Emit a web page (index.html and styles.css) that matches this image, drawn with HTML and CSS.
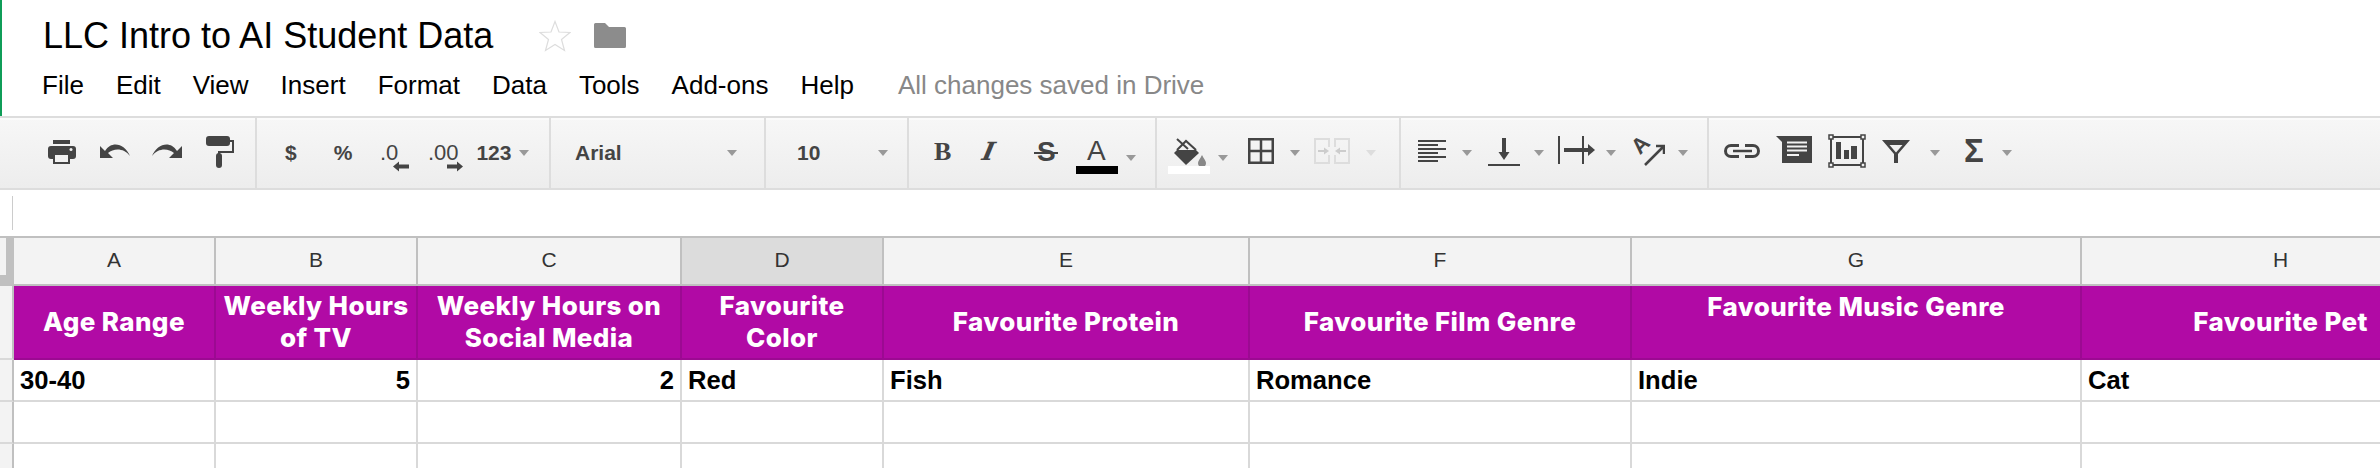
FILE: index.html
```html
<!DOCTYPE html>
<html lang="en">
<head>
  <meta charset="UTF-8" />
  <title>LLC Intro to AI Student Data</title>
  <link rel="stylesheet" href="styles.css">
</head>
<body>
  <header class="docbar">
    <div class="title-row">
      <h1 class="doc-title">LLC Intro to AI Student Data</h1>
      <svg class="star" width="32" height="32" viewBox="0 0 32 32"><polygon points="16,1.5 20,12 31,12.5 22.5,19.5 25.5,30.5 16,24.5 6.5,30.5 9.500,19.5 1,12.5 12,12" fill="none" stroke="#ddd" stroke-width="1.2"/></svg>
      <svg class="folder" width="32" height="25" viewBox="0 0 32 25"><path d="M0 1.500 Q0 0 1.500 0 H11 L15 4 H30.500 Q32 4 32 5.500 V23.500 Q32 25 30.500 25 H1.500 Q0 25 0 23.500Z" fill="#8c8c8c"/></svg>
    </div>
    <nav class="menu">
      <span>File</span><span>Edit</span><span>View</span><span>Insert</span><span>Format</span><span>Data</span><span>Tools</span><span>Add-ons</span><span>Help</span>
      <span class="saved">All changes saved in Drive</span>
    </nav>
  </header>

  <div class="toolbar">
    <div class="tb-group g-history">
      <svg class="i-print" width="28" height="70" viewBox="0 0 28 70"><rect x="5" y="22" width="17" height="4"/><rect y="28" width="28" height="13" rx="3"/><rect x="5" y="35" width="17" height="11"/><rect x="7" y="37" width="13" height="7" fill="#f2f2f2"/><circle cx="23" cy="31.500" r="1.500" fill="#f2f2f2"/></svg>
      <svg class="i-undo" width="30" height="70" viewBox="0 0 30 70"><path d="M0 28 V40 H13 L8 35 C14 30 24 30 30 38 C25 26 12 22 5 33Z"/></svg>
      <svg class="i-redo" width="30" height="70" viewBox="0 0 30 70"><path transform="matrix(-1 0 0 1 30 0)" d="M0 28 V40 H13 L8 35 C14 30 24 30 30 38 C25 26 12 22 5 33Z"/></svg>
      <svg class="i-roller" width="28" height="70" viewBox="0 0 28 70"><rect y="18" width="24" height="10" rx="3"/><path d="M24 23 H27 V34 H13 V38" fill="none" stroke="#444" stroke-width="2"/><rect x="10" y="35" width="6" height="15" rx="3"/></svg>
    </div>
    <div class="tb-group g-number">
      <span class="tb-text t-dollar">$</span>
      <span class="tb-text t-percent">%</span>
      <svg class="i-dec-less" width="29" height="70" viewBox="0 0 29 70"><text x="0" y="42" class="svg-num">.0</text><polygon points="13,48.500 19,43.500 19,46.500 29,46.500 29,50.500 19,50.500 19,53.500"/></svg>
      <svg class="i-dec-more" width="35" height="70" viewBox="0 0 35 70"><text x="0" y="42" class="svg-num">.00</text><polygon points="35,48.500 29,43.500 29,46.500 19,46.500 19,50.500 29,50.500 29,53.500"/></svg>
      <span class="tb-text t-format">123</span>
      <i class="caret c-format"></i>
    </div>
    <div class="tb-group g-font">
      <span class="tb-text">Arial</span>
      <i class="caret c-end"></i>
    </div>
    <div class="tb-group g-size">
      <span class="tb-text">10</span>
      <i class="caret c-end"></i>
    </div>
    <div class="tb-group g-style">
      <svg class="i-bold" width="18" height="70" viewBox="0 0 18 70"><text x="0" y="42" class="svg-b">B</text></svg>
      <svg class="i-italic" width="28" height="70" viewBox="-4 0 28 70"><text class="svg-i" transform="translate(-3 42) skewX(-12)">I</text></svg>
      <svg class="i-strike" width="24" height="70" viewBox="0 0 24 70"><text x="3" y="43" class="svg-s">S</text><rect y="34" width="24" height="2"/></svg>
      <svg class="i-color" width="42" height="70" viewBox="0 0 42 70"><text x="11" y="42" class="svg-a">A</text><rect y="48" width="42" height="8" fill="#000"/></svg>
      <i class="caret c-color"></i>
    </div>
    <div class="tb-group g-cell">
      <svg class="i-fill" width="42" height="70" viewBox="0 0 42 70"><path d="M6 35 L9 32 H28 L31 35 L18 47Z"/><path d="M9 32 L18 23 L28 32 M9 21 L20 31" fill="none" stroke="#444" stroke-width="2"/><path d="M34 37 C32 41 30 43 30 45 A4 4 0 0 0 38 45 C38 43 36 41 34 37Z" fill="#888"/><rect y="48" width="42" height="8" fill="#fff"/></svg>
      <i class="caret c-fill"></i>
      <svg class="i-borders" width="26" height="70" viewBox="0 0 26 70"><path d="M1.250 21.250 H24.750 V44.750 H1.250Z M13 21 V45 M1 33 H25" fill="none" stroke="#444" stroke-width="2.500"/></svg>
      <i class="caret c-borders"></i>
      <svg class="i-merge" width="36" height="70" viewBox="0 0 36 70"><path d="M15 29 V21 H1 V45 H15 V37 M21 29 V21 H35 V45 H21 V37" fill="none" stroke="#ddd" stroke-width="2"/><path d="M4 33 H12 M24 33 H32" stroke="#ccc" stroke-width="2"/><polygon points="15,33 10,29.500 10,36.500" fill="#ccc"/><polygon points="21,33 26,29.500 26,36.500" fill="#ccc"/></svg>
      <i class="caret caret-off c-merge"></i>
    </div>
    <div class="tb-group g-align">
      <svg class="i-align" width="28" height="70" viewBox="0 0 28 70"><path d="M0 23 H28 M0 27 H20 M0 31 H28 M0 35 H20 M0 39 H28 M0 43 H20" stroke="#444" stroke-width="2"/></svg>
      <i class="caret c-align"></i>
      <svg class="i-valign" width="32" height="70" viewBox="0 0 32 70"><rect x="14" y="20" width="4" height="16"/><polygon points="10.500,34 21.500,34 16,42"/><rect y="46" width="32" height="2"/></svg>
      <i class="caret c-valign"></i>
      <svg class="i-wrap" width="38" height="70" viewBox="0 0 38 70"><rect y="18" width="2" height="28"/><rect x="24" y="18" width="2" height="28"/><rect x="6" y="30" width="25" height="4"/><polygon points="30,26 37,32 30,38"/></svg>
      <i class="caret c-wrap"></i>
      <svg class="i-rotate" width="38" height="70" viewBox="-8 0 38 70"><text class="svg-rot" transform="translate(10.500 32) rotate(-45)" text-anchor="middle">A</text><path d="M10 47 L28 29 M21 28 H29 V36" fill="none" stroke="#444" stroke-width="2.500"/></svg>
      <i class="caret c-rotate"></i>
    </div>
    <div class="tb-group g-insert">
      <svg class="i-link" width="36" height="70" viewBox="0 0 36 70"><path d="M15 27.500 H7 A5.500 5.500 0 0 0 7 38.500 H15 M21 27.500 H29 A5.500 5.500 0 0 1 29 38.500 H21" fill="none" stroke="#444" stroke-width="3"/><path d="M9 33 H28" stroke="#444" stroke-width="2.500"/></svg>
      <svg class="i-comment" width="36" height="70" viewBox="0 0 36 70"><polygon points="0,18 36,18 36,45 6,45 6,24"/><path d="M11 24.500 H31 M11 28.500 H31 M11 32.500 H31 M11 37 H23" stroke="#f2f2f2" stroke-width="2"/></svg>
      <svg class="i-chart" width="38" height="70" viewBox="0 0 38 70"><rect x="3" y="19" width="32" height="28" fill="none" stroke="#444" stroke-width="2"/><rect x="1" y="17" width="4" height="4" fill="#f2f2f2" stroke="#444" stroke-width="1.500"/><rect x="33" y="17" width="4" height="4" fill="#f2f2f2" stroke="#444" stroke-width="1.500"/><rect x="1" y="45" width="4" height="4" fill="#f2f2f2" stroke="#444" stroke-width="1.500"/><rect x="33" y="45" width="4" height="4" fill="#f2f2f2" stroke="#444" stroke-width="1.500"/><rect x="8" y="24" width="5" height="17"/><rect x="16" y="32" width="5" height="9"/><rect x="23" y="28" width="6" height="13"/></svg>
      <svg class="i-filter" width="28" height="70" viewBox="0 0 28 70"><polygon points="0,22 28,22 16,36 16,45 12,45 12,36"/><polygon points="7.500,27 20.500,27 14,34.500" fill="#f2f2f2"/></svg>
      <i class="caret c-filter"></i>
      <svg class="i-sigma" width="19" height="70" viewBox="0 0 19 70"><text x="0" y="44" class="svg-sigma">Σ</text></svg>
      <i class="caret c-sigma"></i>
    </div>
  </div>

  <div class="formula-bar"><span class="fx-line"></span></div>

  <div class="sheet">
    <div class="corner"></div>
    <div class="col-head">A</div>
    <div class="col-head">B</div>
    <div class="col-head">C</div>
    <div class="col-head is-active">D</div>
    <div class="col-head">E</div>
    <div class="col-head">F</div>
    <div class="col-head">G</div>
    <div class="col-head">H</div>

    <div class="row-head"></div>
    <div class="title-cell">Age Range</div>
    <div class="title-cell">Weekly Hours<br>of TV</div>
    <div class="title-cell">Weekly Hours on<br>Social Media</div>
    <div class="title-cell">Favourite<br>Color</div>
    <div class="title-cell">Favourite Protein</div>
    <div class="title-cell">Favourite Film Genre</div>
    <div class="title-cell is-top">Favourite Music Genre</div>
    <div class="title-cell">Favourite Pet</div>

    <div class="row-head"></div>
    <div class="cell">30-40</div>
    <div class="cell is-num">5</div>
    <div class="cell is-num">2</div>
    <div class="cell">Red</div>
    <div class="cell">Fish</div>
    <div class="cell">Romance</div>
    <div class="cell">Indie</div>
    <div class="cell">Cat</div>

    <div class="row-head"></div>
    <div class="cell"></div><div class="cell"></div><div class="cell"></div><div class="cell"></div><div class="cell"></div><div class="cell"></div><div class="cell"></div><div class="cell"></div>

    <div class="row-head"></div>
    <div class="cell"></div><div class="cell"></div><div class="cell"></div><div class="cell"></div><div class="cell"></div><div class="cell"></div><div class="cell"></div><div class="cell"></div>
  </div>
</body>
</html>
```

FILE: styles.css
```css
html, body {
  margin: 0;
  height: 468px;
  overflow: hidden;
  background: #fff;
  font-family: "Liberation Sans", Arial, sans-serif;
}

/* document header */
.docbar {
  height: 116px;
  box-sizing: border-box;
  border-left: 2px solid #0f9d58;
  padding-left: 41px;
}
.title-row {
  display: flex;
  align-items: center;
  height: 71px;
}
.doc-title {
  margin: 0;
  font-size: 36px;
  font-weight: normal;
  color: #000;
  width: 449px;
  white-space: nowrap;
}
.star {
  margin-left: 47px;
}
.folder {
  margin-left: 23px;
}
.menu {
  display: flex;
  gap: 32px;
  margin-left: -1px;
  font-size: 26px;
  line-height: 28px;
  color: #000;
}
.saved {
  margin-left: 12px;
  color: #888;
}

/* toolbar */
.toolbar {
  display: flex;
  height: 74px;
  box-sizing: border-box;
  border-top: 2px solid #ddd;
  border-bottom: 2px solid #ddd;
  background: linear-gradient(#f7f7f7, #ededed);
  box-shadow: inset 0 2px 0 #fbfbfb;
}
.tb-group {
  display: flex;
  align-items: center;
  height: 70px;
  box-sizing: border-box;
  border-right: 2px solid #ddd;
  fill: #444;
}
.tb-group svg {
  flex: none;
}
.tb-text {
  font-size: 21px;
  font-weight: bold;
  color: #444;
}
.caret {
  flex: none;
  width: 0;
  height: 0;
  border-left: 5px solid transparent;
  border-right: 5px solid transparent;
  border-top: 6px solid #999;
}
.caret-off {
  border-top-color: #ddd;
}
.svg-num { font: 22px "Liberation Sans", sans-serif; }
.svg-b { font: bold 26px "Liberation Serif", serif; }
.svg-i { font: italic bold 25px "DejaVu Serif", serif; }
.svg-s { font: bold 28px "Liberation Sans", sans-serif; }
.svg-a { font: 28px "Liberation Sans", sans-serif; }
.svg-rot { font: bold 22px "Liberation Sans", sans-serif; }
.svg-sigma { font: bold 33px "Liberation Sans", sans-serif; }

.g-history { width: 257px; }
.i-print { margin-left: 48px; }
.i-undo { margin-left: 24px; }
.i-redo { margin-left: 22px; }
.i-roller { margin-left: 24px; }

.g-number { width: 294px; }
.t-dollar { margin-left: 28px; }
.t-percent { margin-left: 37px; }
.i-dec-less { margin-left: 28px; }
.i-dec-more { margin-left: 19px; }
.t-format { margin-left: 13px; }
.c-format { margin-left: 8px; }

.g-font { width: 215px; padding-left: 24px; }
.g-size { width: 143px; padding-left: 31px; }
.c-end { margin-left: auto; }
.g-font .c-end { margin-right: 27px; }
.g-size .c-end { margin-right: 19px; }

.g-style { width: 248px; }
.i-bold { margin-left: 25px; }
.i-italic { margin-left: 28px; margin-right: -4px; }
.i-strike { margin-left: 30px; }
.i-color { margin-left: 18px; }
.c-color { margin-left: 8px; margin-top: 10px; }

.g-cell { width: 244px; }
.i-fill { margin-left: 11px; }
.c-fill { margin-left: 8px; margin-top: 10px; }
.i-borders { margin-left: 20px; }
.c-borders { margin-left: 16px; }
.i-merge { margin-left: 14px; }
.c-merge { margin-left: 16px; }

.g-align { width: 308px; }
.i-align { margin-left: 17px; }
.c-align { margin-left: 16px; }
.i-valign { margin-left: 16px; }
.c-valign { margin-left: 14px; }
.i-wrap { margin-left: 14px; }
.c-wrap { margin-left: 10px; }
.i-rotate { margin-left: 11px; }
.c-rotate { margin-left: 13px; }

.g-insert { border-right: 0; }
.i-link { margin-left: 15px; }
.i-comment { margin-left: 16px; }
.i-chart { margin-left: 16px; }
.i-filter { margin-left: 16px; }
.c-filter { margin-left: 20px; }
.i-sigma { margin-left: 24px; }
.c-sigma { margin-left: 19px; }

/* formula bar */
.formula-bar {
  height: 46px;
  box-sizing: border-box;
  padding: 6px 0 6px 12px;
}
.fx-line {
  display: block;
  width: 1px;
  height: 34px;
  background: #ccc;
}

/* sheet */
.sheet {
  display: grid;
  grid-template-columns: 14px 202px 202px 264px 202px 366px 382px 450px 399px;
  grid-template-rows: 48px 74px 42px 42px 42px;
  width: 2481px;
  border-top: 2px solid #c0c0c0;
}
.corner {
  box-sizing: border-box;
  background: #f3f3f3;
  border-right: 8px solid #c0c0c0;
  border-bottom: 11px solid #c0c0c0;
}
.row-head {
  box-sizing: border-box;
  background: #f3f3f3;
  border-right: 2px solid #c0c0c0;
  border-bottom: 2px solid #d9d9d9;
}
.col-head {
  display: flex;
  align-items: center;
  justify-content: center;
  box-sizing: border-box;
  padding-bottom: 2px;
  background: #f3f3f3;
  border-right: 2px solid #c0c0c0;
  border-bottom: 2px solid #c0c0c0;
  font-size: 21px;
  color: #333;
}
.col-head.is-active {
  background: #dcdcdc;
}
.title-cell {
  display: flex;
  align-items: center;
  justify-content: center;
  box-sizing: border-box;
  background: #b10aa5;
  border-right: 2px solid #9c0a92;
  border-bottom: 2px solid #9c0a92;
  font-family: Inter, "Open Sans", sans-serif;
  font-size: 26px;
  font-weight: 800;
  letter-spacing: 0.4px;
  line-height: 32px;
  text-align: center;
  color: #fff;
}
.title-cell.is-top {
  align-items: flex-start;
  padding-top: 5px;
}
.cell {
  box-sizing: border-box;
  padding: 0 6px;
  border-right: 2px solid #d9d9d9;
  border-bottom: 2px solid #d9d9d9;
  font-size: 25.6px;
  font-weight: bold;
  line-height: 40px;
  color: #000;
}
.cell.is-num {
  text-align: right;
}
```
